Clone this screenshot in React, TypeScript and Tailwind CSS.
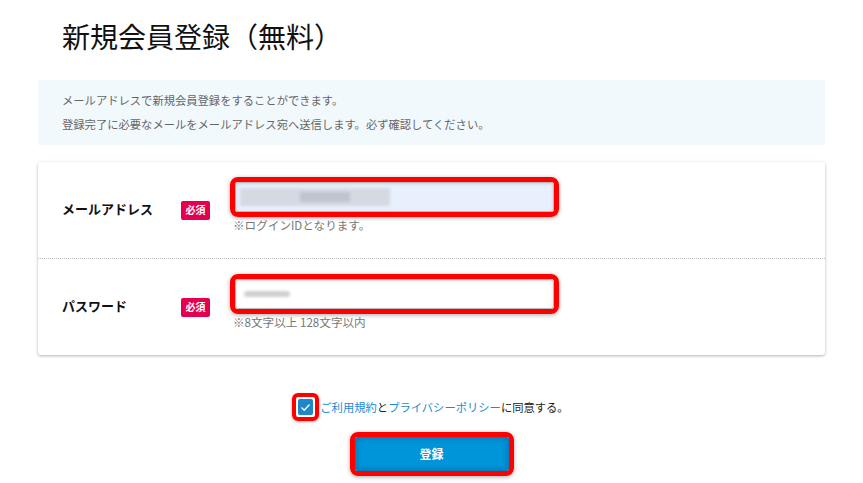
import React from "react";

const jp = { fontFamily: '"Noto Sans CJK JP", "Noto Sans", sans-serif' };

function Badge() {
  return (
    <span className="flex h-[19px] w-[29px] items-center justify-center rounded-[2px] bg-[#e4004f] text-[10px] font-bold leading-none text-white">
      必須
    </span>
  );
}

function FieldRow({
  label,
  hint,
  autofill,
  children,
}: {
  label: string;
  hint: string;
  autofill?: boolean;
  children: React.ReactNode;
}) {
  return (
    <div className="flex h-[96px] items-center pl-6">
      <div className="-mt-[3px] w-[119px] text-[13px] font-bold text-[#111]">{label}</div>
      <Badge />
      <div className="ml-[20px] flex flex-col pb-[10px]">
        {/* red highlight */}
        <div className="rounded-[8px] border-[5px] border-[#ff0000] shadow-[0_1px_4px_rgba(0,0,0,0.35)]">
          <div
            className={
              "relative flex h-[30px] w-[319px] items-center overflow-hidden rounded-[3px] border border-[#b9b9b9] shadow-[inset_0_1px_3px_rgba(0,0,0,0.15)] " +
              (autofill ? "bg-[#e8f0fe]" : "bg-white")
            }
          >
            {children}
          </div>
        </div>
        <div className="ml-[3px] text-[11.6px] leading-[16px] text-[#777]">{hint}</div>
      </div>
    </div>
  );
}

export default function App() {
  return (
    <div style={jp} className="min-h-[483px] w-full bg-white">
      <div className="mx-[38px]">
        {/* Title */}
        <h1 className="pl-6 pt-4 text-[28px] font-normal leading-[40px] text-[#111]">
          新規会員登録（無料）
        </h1>

        {/* Info */}
        <div className="mt-6 bg-[#f2f9fd] px-6 pt-2 pb-[9px] text-[11.3px] leading-[24px] text-[#666]">
          <p>メールアドレスで新規会員登録をすることができます。</p>
          <p>登録完了に必要なメールをメールアドレス宛へ送信します。必ず確認してください。</p>
        </div>

        {/* Form card */}
        <div className="mt-[17px] rounded-[3px] bg-white shadow-[0_1px_3px_rgba(0,0,0,0.3)]">
          <FieldRow label="メールアドレス" hint="※ログインIDとなります。" autofill>
            <div className="ml-[4px] h-[18px] w-[150px] bg-[#d5d9e2] blur-[1.5px]">
              <div className="ml-[60px] mt-[4px] h-[10px] w-[50px] bg-[#bfc4ce]" />
            </div>
          </FieldRow>
          <div className="border-t border-dotted border-[#bbb]" />
          <FieldRow label="パスワード" hint="※8文字以上 128文字以内">
            <div className="ml-[8px] h-[6px] w-[46px] rounded-full bg-[#cfcfcf] blur-[1.5px]" />
          </FieldRow>
        </div>

        {/* Agreement */}
        <div className="mt-[38px] flex items-center justify-center pr-[2px]">
          <div className="rounded-[6px] border-[4px] border-[#ff0000] px-[2px] py-[2px] shadow-[0_1px_3px_rgba(0,0,0,0.3)]">
            <div className="flex h-[16px] w-[15px] items-center justify-center rounded-[2px] bg-[#1d87c8]">
              <svg width="11" height="9" viewBox="0 0 11 9" fill="none">
                <path d="M1.5 4.5 L4.2 7.2 L9.5 1.5" stroke="white" strokeWidth="1.3" />
              </svg>
            </div>
          </div>
          <p className="ml-px text-[11.3px] leading-[16px] text-[#222]">
            <span className="text-[#1a8ad4]">ご利用規約</span>と
            <span className="text-[#1a8ad4]">プライバシーポリシー</span>に同意する。
          </p>
        </div>

        {/* Submit */}
        <div className="mt-[11px] flex justify-center">
          <div className="rounded-[8px] border-[5px] border-[#ff0000] shadow-[0_1px_4px_rgba(0,0,0,0.35)]">
            <button className="flex h-[34px] w-[154px] items-center justify-center rounded-[3px] bg-[#0095d9] text-[12px] font-bold text-white shadow-[inset_0_0_6px_rgba(0,40,90,0.45)]">
              登録
            </button>
          </div>
        </div>
      </div>
    </div>
  );
}
